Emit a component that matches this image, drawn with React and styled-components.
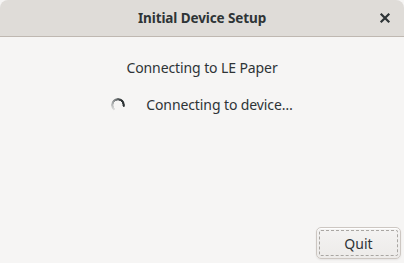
import React from 'react'
import styled, { createGlobalStyle } from 'styled-components'

const Global = createGlobalStyle`
  html, body { margin: 0; padding: 0; background: #f6f5f4; }
  body { font-family: "Noto Sans", "DejaVu Sans", sans-serif; color: #2e3436; }
`

export default function App() {
  return (
    <>
      <Global />
      <Window>
        <HeaderBar>
          <Title>Initial Device Setup</Title>
          <CloseButton aria-label="Close">
            <svg width="16" height="16" viewBox="0 0 16 16">
              <path d="M4.5 4.5l7 7M11.5 4.5l-7 7" stroke="#2e3436" strokeWidth="2.2" strokeLinecap="square" />
            </svg>
          </CloseButton>
        </HeaderBar>
        <Content>
          <Heading>Connecting to LE Paper</Heading>
          <StatusRow>
            <Spinner />
            <StatusText>Connecting to device…</StatusText>
          </StatusRow>
        </Content>
        <Actions>
          <Button>Quit</Button>
        </Actions>
      </Window>
    </>
  )
}

const Window = styled.div`
  display: flex;
  flex-direction: column;
  width: 404px;
  height: 263px;
  background: #f6f5f4;
`

const HeaderBar = styled.div`
  position: relative;
  display: flex;
  align-items: center;
  justify-content: center;
  height: 36px;
  flex-shrink: 0;
  background: #dfdcd8;
  border-bottom: 1px solid #bfb8b1;
  border-radius: 8px 8px 0 0;
`

const Title = styled.div`
  font-weight: bold;
  font-size: 13.5px;
  letter-spacing: -0.1px;
  color: #2e3436;
`

const CloseButton = styled.div`
  position: absolute;
  right: 11px;
  top: 10px;
  width: 16px;
  height: 16px;
  display: flex;
`

const Content = styled.div`
  flex: 1;
  display: flex;
  flex-direction: column;
  align-items: center;
  padding-top: 21px;
`

const Heading = styled.div`
  font-size: 14px;
  line-height: 20px;
  letter-spacing: -0.1px;
`

const StatusRow = styled.div`
  display: flex;
  align-items: center;
  gap: 21px;
  margin-top: 17px;
`

const Spinner = styled.div`
  width: 14px;
  height: 14px;
  border-radius: 50%;
  background: conic-gradient(from 215deg, #e4e4e3 0deg, #9a9e9f 90deg, #2e3436 180deg, #2e3436 250deg, transparent 252deg);
  -webkit-mask: radial-gradient(circle, transparent 4.3px, #000 4.8px);
  mask: radial-gradient(circle, transparent 4.3px, #000 4.8px);
`

const StatusText = styled.div`
  font-size: 14px;
  line-height: 20px;
  letter-spacing: -0.1px;
`

const Actions = styled.div`
  display: flex;
  justify-content: flex-end;
  padding: 0 3px 4px 0;
`

const Button = styled.button`
  width: 85px;
  height: 32px;
  font-family: inherit;
  font-size: 14px;
  color: #2e3436;
  background: linear-gradient(#f4f3f2, #edebe9);
  border: 1px solid #cdc7c2;
  border-radius: 5px;
  outline: 1px dashed #a9a6a2;
  outline-offset: -4px;
  box-shadow: inset 0 1px #ffffff, 0 1px 2px rgba(0,0,0,0.07);
`
